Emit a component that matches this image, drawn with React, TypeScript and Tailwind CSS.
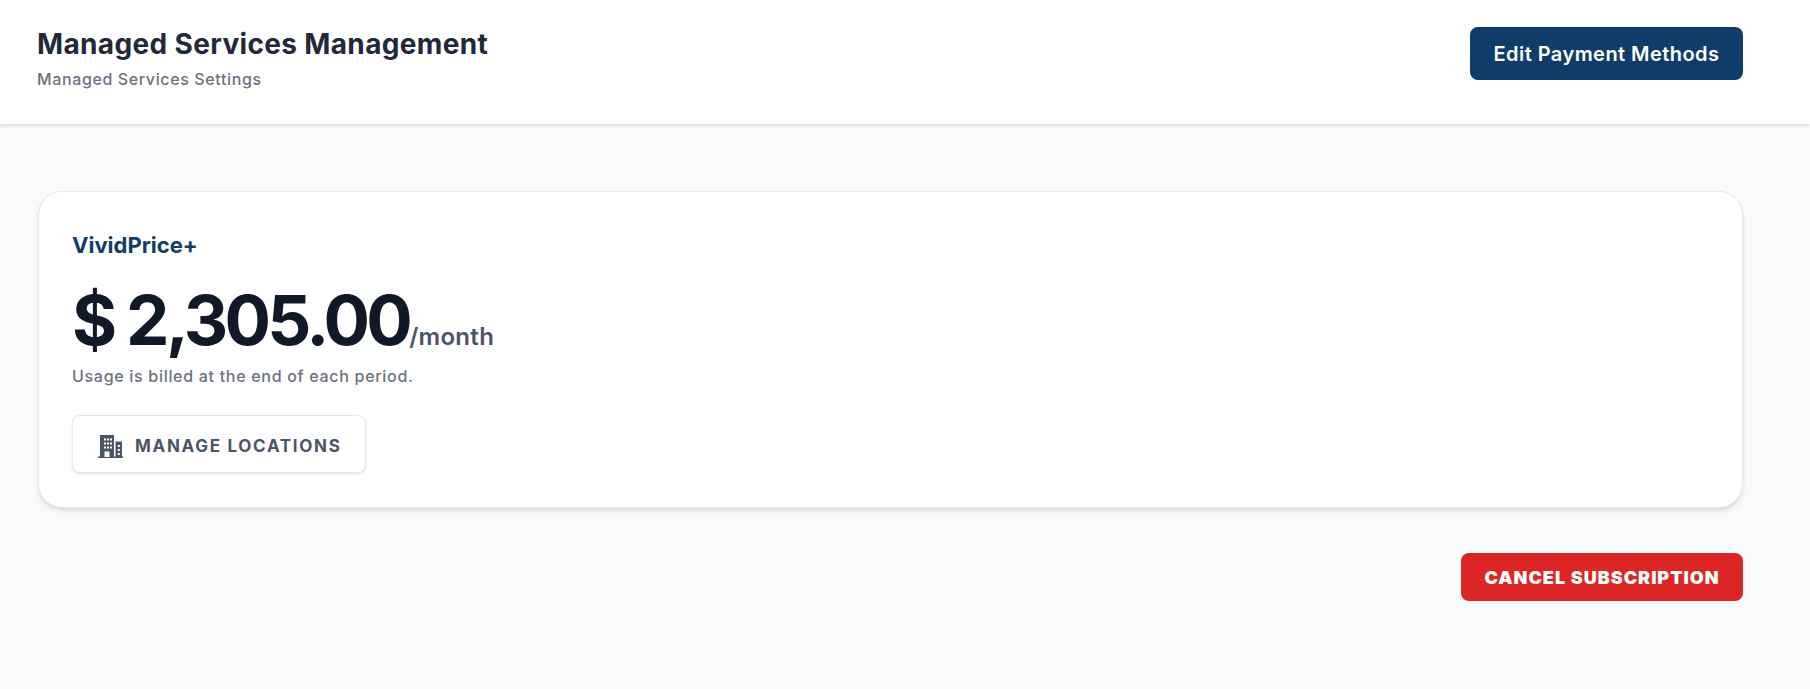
import React from 'react';

const font = "font-['Inter','Liberation_Sans',sans-serif]";

function BuildingIcon() {
  return (
    <svg viewBox="0 0 25 23" className="w-[25px] h-[23px] shrink-0" fill="#4b5563">
      <path d="M2 0h14v22H2z" />
      <path d="M17.5 6.5H24V22h-6.500z" />
      <path d="M0 21.500h25V23H0z" />
      <g fill="#fff">
        <path d="M6 3.500h2v2H6zM9 3.500h2v2H9zM12 3.500h2v2h-2zM6 7.500h2v2H6zM9 7.500h2v2H9zM12 7.500h2v2h-2zM6 11.500h2v2H6zM9 11.500h2v2H9zM12 11.500h2v2h-2z" />
        <path d="M6.500 16.500h5V22h-5z" />
        <path d="M19.800 10h2v2h-2zM19.800 14h2v2h-2zM19.800 18h2v2h-2z" />
      </g>
    </svg>
  );
}

export default function App() {
  return (
    <div className={`${font} min-h-[689px] bg-[#f9fafc]`}>
      <header className="h-[125px] bg-white border-b border-[#e5e7eb] shadow-sm pl-[37px] pr-[67px] flex items-start justify-between">
        <div className="pt-[26px]">
          <h1 className="text-[28px] leading-[36px] font-bold text-[#1f2937] tracking-[0.35px]">Managed Services Management</h1>
          <p className="mt-[7px] text-[16px] leading-[20px] font-medium text-[#6b7280] tracking-[0.62px]">Managed Services Settings</p>
        </div>
        <button className="mt-[27px] w-[273px] h-[53px] rounded-lg bg-[#0f3c68] text-white text-[20px] font-semibold tracking-[0.45px]">Edit Payment Methods</button>
      </header>

      <main className="pt-[66px] pl-[38px] pr-[67px]">
        <section className="h-[317px] rounded-3xl bg-white border border-[#e5e7eb] shadow-md px-[33px] pt-[39px]">
          <h2 className="text-[22px] leading-[28px] font-bold text-[#0f3c68]">VividPrice+</h2>
          <div className="mt-[25px] flex items-baseline">
            <span className="text-[69px] leading-[72px] font-bold text-[#111827] tracking-[-3.7px]">$ 2,305.00</span>
            <span className="text-[24px] font-semibold text-[#4b5563] tracking-[0.3px]">/month</span>
          </div>
          <p className="mt-[10px] text-[16px] leading-[20px] font-medium text-[#6b7280] tracking-[0.7px]">Usage is billed at the end of each period.</p>
          <button className="mt-[29px] w-[294px] h-[58px] pl-[25px] pt-[5px] rounded-lg bg-white border border-[#e5e7eb] shadow-sm flex items-center gap-[12px] text-[17px] font-bold tracking-[1.7px] text-[#4b5563]">
            <BuildingIcon />
            MANAGE LOCATIONS
          </button>
        </section>
        <div className="mt-[45px] flex justify-end">
          <button className="w-[282px] h-[48px] rounded-lg bg-[#dc2626] text-white text-[18px] font-black tracking-[1px]">CANCEL SUBSCRIPTION</button>
        </div>
      </main>
    </div>
  );
}
